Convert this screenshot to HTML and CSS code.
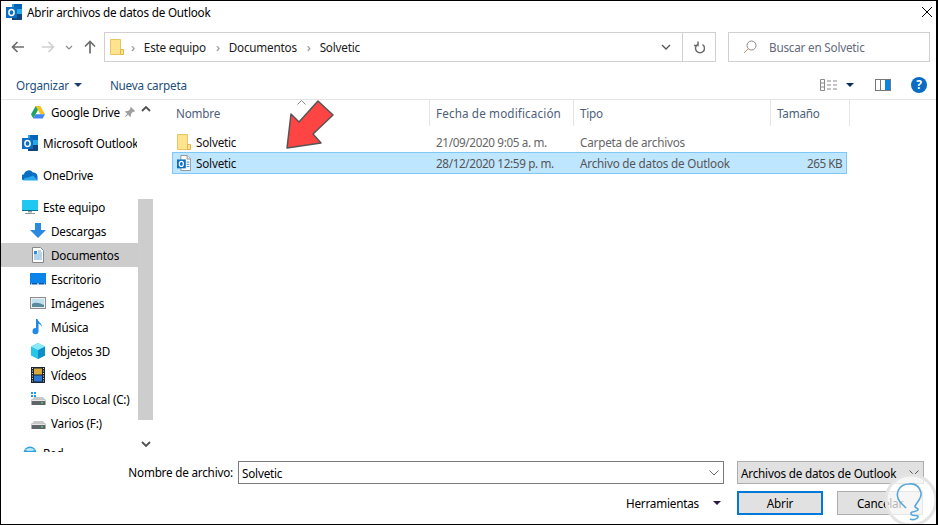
FILE: index.html
```html
<!DOCTYPE html>
<html lang="es">
<head>
<meta charset="utf-8">
<title>Abrir archivos de datos de Outlook</title>
<link rel="stylesheet" href="styles.css">
</head>
<body>
<svg class="defs" width="0" height="0">
  <defs>
    <symbol id="folder" viewBox="0 0 16 16">
      <path d="M1.5.5h10v15h-10z" fill="#ffe48f" stroke="#e8c560"/>
      <path d="M11.5 10.5h3v5h-3z" fill="#ffe48f" stroke="#e0b64a"/>
    </symbol>
    <symbol id="outlook" viewBox="0 0 16 16">
      <path d="M6 0h9a1 1 0 0 1 1 1v14a1 1 0 0 1-1 1H6z" fill="#28a8ea"/>
      <path d="M8 0h8v5H8z" fill="#0364b8"/>
      <path d="M6 10h10v5a1 1 0 0 1-1 1H6z" fill="#14447d"/>
      <rect y="3" width="11" height="11" fill="#0a6fc2"/>
      <ellipse cx="5.5" cy="8.5" rx="2.6" ry="3" fill="none" stroke="#fff" stroke-width="1.5"/>
    </symbol>
    <symbol id="outlookdoc" viewBox="0 0 16 18">
      <path d="M4.5.5h7l4 4v13h-11z" fill="#fff" stroke="#8a8a8a"/>
      <path d="M11.5.5v4h4" fill="#eee" stroke="#8a8a8a"/>
      <path d="M11 8h3M11 10.500h3M11 13h3" stroke="#2b7cd3"/>
      <rect y="5" width="10" height="10" fill="#0a6fc2"/>
      <ellipse cx="5" cy="10" rx="2.300" ry="2.800" fill="none" stroke="#fff" stroke-width="1.400"/>
    </symbol>
    <symbol id="drive" viewBox="0 0 14 13">
      <path d="M4.700 0h4.600L14 8.300h-4.600z" fill="#f7c31c"/>
      <path d="M4.700 0 7 4.100 2.300 12.500 0 8.300z" fill="#1fa463"/>
      <path d="M2.300 12.500 4.700 8.300H14l-2.300 4.200z" fill="#4286f5"/>
    </symbol>
    <symbol id="disk" viewBox="0 0 16 16">
      <path d="M2 8.500 4 6h9l2 2.500z" fill="#c8c8c8"/>
      <rect x="1.500" y="8.500" width="14" height="5.500" fill="#5f6468"/>
      <rect x="1.500" y="8.500" width="14" height="1.500" fill="#e8e8e8"/>
      <rect x="11" y="11" width="2" height="1.500" fill="#3fd06a"/>
    </symbol>
  </defs>
</svg>

<div class="dialog">
  <header class="titlebar">
    <svg class="ico16 title-ico" viewBox="0 0 16 16"><use href="#outlook"/></svg>
    <span class="title">Abrir archivos de datos de Outlook</span>
    <svg class="close" viewBox="0 0 10 10"><path d="M0 0l10 10M10 0L0 10" stroke="#000" fill="none"/></svg>
  </header>

  <div class="navrow">
    <div class="navbtns">
      <svg class="nav-ico" viewBox="0 0 14 12"><path d="M13 6H2M6.500 1 1.500 6l5 5" fill="none" stroke="#6d6d6d" stroke-width="1.700"/></svg>
      <svg class="nav-ico fwd" viewBox="0 0 14 12"><path d="M1 6h11M7.500 1l5 5-5 5" fill="none" stroke="#d0d0d0" stroke-width="1.700"/></svg>
      <svg class="nav-chev" viewBox="0 0 8 5"><path d="M1 1l3 3 3-3" fill="none" stroke="#8a8a8a" stroke-width="1.200"/></svg>
      <svg class="nav-ico up" viewBox="0 0 12 14"><path d="M6 13.500V2M1 6.500l5-5 5 5" fill="none" stroke="#6d6d6d" stroke-width="1.700"/></svg>
    </div>
    <div class="addr">
      <svg class="addr-folder" viewBox="0 0 16 16"><use href="#folder"/></svg>
      <span class="sep first">›</span><span>Este equipo</span>
      <span class="sep">›</span><span>Documentos</span>
      <span class="sep">›</span><span>Solvetic</span>
      <svg class="addr-chev" viewBox="0 0 10 6"><path d="M1 1l4 4 4-4" fill="none" stroke="#555" stroke-width="1.300"/></svg>
      <span class="addr-refresh">
        <svg viewBox="0 0 12 13" class="refresh"><path d="M3.500 3.500a4.500 4.500 0 1 0 5 0M4 .5v4H0" transform="translate(1 0)" fill="none" stroke="#6d6d6d" stroke-width="1.500"/></svg>
      </span>
    </div>
    <div class="search">
      <svg class="search-ico" viewBox="0 0 14 14"><circle cx="8.500" cy="5.500" r="4.500" fill="none" stroke="#8a8a8a"/><path d="M5.300 8.700 1 13" stroke="#c99b6a" fill="none"/></svg>
      <span>Buscar en Solvetic</span>
    </div>
  </div>

  <div class="toolbar">
    <span class="tool">Organizar</span>
    <span class="tri tri-blue"></span>
    <span class="tool new">Nueva carpeta</span>
    <span class="spacer"></span>
    <svg class="views" viewBox="0 0 17 12"><path d="M.5.500h4v11h-4zM.5 4h4M.5 8h4" fill="none" stroke="#8a8a8a"/><path d="M7 2h4M13 2h4M7 6h4M13 6h4M7 10h4M13 10h4" stroke="#8a8a8a"/></svg>
    <span class="tri tri-navy"></span>
    <svg class="pane" viewBox="0 0 16 12"><rect x=".5" y=".5" width="15" height="11" fill="#fff" stroke="#777"/><path d="M5.500 0v12" stroke="#777"/><rect x="10" y="1" width="5" height="10" fill="#0a84e0"/></svg>
    <span class="help">?</span>
  </div>

  <div class="main">
    <nav class="sidebar">
      <div class="tree">
        <div class="item drive-row"><svg class="ico-drive" viewBox="0 0 14 13"><use href="#drive"/></svg><span>Google Drive</span><svg class="pin" viewBox="0 0 10 10"><path d="M6 0l4 4-1 1-1-.300L6 7v2L5 10 3.300 7.700.500 10 0 9.500 2.300 6.700 0 5l1-1h2l2.300-2L5 1z" fill="#a0a0a0"/></svg></div>
        <div class="item root group"><svg class="ico16" viewBox="0 0 16 16"><use href="#outlook"/></svg><span class="clip">Microsoft Outlook</span></div>
        <div class="item root group">
          <svg class="ico16" viewBox="0 0 16 16"><path d="M1 13a3 3 0 0 1 1-5.800 5 5 0 0 1 9-1.700 4 4 0 0 1 4.500 4V13z" fill="#0a6fc2"/><path d="M1 13.500h15l-5-5-5 2-3 .5z" fill="#28a8ea"/></svg>
          <span>OneDrive</span>
        </div>
        <div class="item root group">
          <svg class="ico16" viewBox="0 0 16 16"><rect y="1" width="16" height="10" fill="#1ec8f0"/><rect y="11" width="16" height="1" fill="#0d6f8f"/><path d="M6 12h4v1.500H6zM3 14h10v1H3z" fill="#8f9ba3"/></svg>
          <span>Este equipo</span>
        </div>
        <div class="item child">
          <svg class="ico16" viewBox="0 0 16 16"><path d="M5 0h6v7h5l-8 8-8-8h5z" fill="#2a8ae0"/></svg>
          <span>Descargas</span>
        </div>
        <div class="item child active">
          <svg class="ico16" viewBox="0 0 16 16"><path d="M2.500.5h8l3 3v12h-11z" fill="#fff" stroke="#888"/><path d="M4 4h3v3H4z" fill="#2a8ae0"/><path d="M8 4h3M8 6h4M4 8h8M4 10h8M4 12h8" stroke="#6aa9d8"/></svg>
          <span>Documentos</span>
        </div>
        <div class="item child">
          <svg class="ico16" viewBox="0 0 16 16"><rect y="2" width="16" height="11" fill="#0a84e8"/><rect y="12" width="16" height="1.500" fill="#0858a8"/><path d="M1 13h1M7 13h2M14 13h1" stroke="#fff"/></svg>
          <span>Escritorio</span>
        </div>
        <div class="item child">
          <svg class="ico16" viewBox="0 0 16 16"><rect x=".5" y="2.500" width="15" height="11" fill="#eee" stroke="#8d8d8d"/><rect x="2" y="4" width="12" height="8" fill="#bfe0ee"/><path d="M2 9q4-3 12 1v2H2z" fill="#5a8b9c"/></svg>
          <span>Imágenes</span>
        </div>
        <div class="item child">
          <svg class="ico16" viewBox="0 0 16 16"><path d="M6 0h1.500c.5 3 4.500 4 4.500 8-1-2-2-3-3.500-3.300V12a3 3 0 1 1-2.500-2.800z" fill="#1e8ae6"/></svg>
          <span>Música</span>
        </div>
        <div class="item child">
          <svg class="ico16" viewBox="0 0 16 16"><path d="M8 0l7 3.500v9L8 16l-7-3.500v-9z" fill="#25c6e8"/><path d="M8 7l7-3.500v9L8 16z" fill="#0d8fc8"/><path d="M8 0l7 3.500L8 7 1 3.500z" fill="#8be8f6"/></svg>
          <span>Objetos 3D</span>
        </div>
        <div class="item child">
          <svg class="ico16" viewBox="0 0 16 16"><rect x="1" y="0" width="14" height="16" fill="#1b2430"/><rect x="4" y="1.500" width="8" height="6" fill="#d8a83a"/><rect x="4" y="8.500" width="8" height="6" fill="#2a78d0"/><path d="M2.500 1v14M13.500 1v14" stroke="#ddd" stroke-dasharray="1 1.500"/></svg>
          <span>Vídeos</span>
        </div>
        <div class="item child">
          <svg class="ico16" viewBox="0 0 16 16"><use href="#disk"/><path d="M1 1h2v2H1zM4 1h2v2H4zM1 4h2v2H1zM4 4h2v2H4z" fill="#1e9be8"/></svg>
          <span>Disco Local (C:)</span>
        </div>
        <div class="item child">
          <svg class="ico16" viewBox="0 0 16 16"><use href="#disk"/></svg>
          <span>Varios (F:)</span>
        </div>
        <div class="item root group-wide">
          <svg class="ico16" viewBox="0 0 16 16"><circle cx="8" cy="8" r="6.500" fill="#2aa3e0"/><path d="M3 5q5-4 10 0-5 2-10 0z" fill="#bfe6f5"/></svg>
          <span>Red</span>
        </div>
      </div>
      <div class="scrollbar">
        <svg class="sb-btn" viewBox="0 0 10 6"><path d="M1 5l4-4 4 4" fill="none" stroke="#505050" stroke-width="1.800"/></svg>
        <div class="thumb"></div>
        <svg class="sb-btn" viewBox="0 0 10 6"><path d="M1 1l4 4 4-4" fill="none" stroke="#505050" stroke-width="1.800"/></svg>
      </div>
    </nav>

    <section class="list">
      <div class="cols head">
        <div class="col c1">Nombre</div>
        <div class="col c2">Fecha de modificación</div>
        <div class="col c3">Tipo</div>
        <div class="col c4">Tamaño</div>
        <svg class="sort" viewBox="0 0 9 5"><path d="M.5 4.500l4-4 4 4" fill="none" stroke="#8a8a8a"/></svg>
      </div>
      <div class="rows">
        <div class="row">
          <div class="cell name"><svg class="ico16" viewBox="0 0 16 16"><use href="#folder"/></svg><span>Solvetic</span></div>
          <div class="cell meta date">21/09/2020 9:05 a. m.</div>
          <div class="cell meta">Carpeta de archivos</div>
          <div class="cell"></div>
        </div>
        <div class="row selected">
          <div class="cell name"><svg class="ico16" viewBox="0 0 16 18"><use href="#outlookdoc"/></svg><span>Solvetic</span></div>
          <div class="cell meta date">28/12/2020 12:59 p. m.</div>
          <div class="cell meta">Archivo de datos de Outlook</div>
          <div class="cell meta size">265 KB</div>
        </div>
      </div>
    </section>
  </div>

  <footer class="footer">
    <div class="file-row">
      <label class="file-label">Nombre de archivo:</label>
      <div class="file-input"><span>Solvetic</span><svg class="combo-chev" viewBox="0 0 10 6"><path d="M.5.500 5 5 9.500.5" fill="none" stroke="#666"/></svg></div>
      <div class="filter"><span>Archivos de datos de Outlook</span><svg class="combo-chev" viewBox="0 0 10 6"><path d="M.5.500 5 5 9.500.5" fill="none" stroke="#555"/></svg></div>
    </div>
    <div class="btn-row">
      <span class="tools">Herramientas</span>
      <span class="tri tri-dark"></span>
      <button class="btn primary">Abrir</button>
      <button class="btn">Cancelar</button>
    </div>
  </footer>

  <svg class="arrow" viewBox="0 0 52 52"><path d="M34 2 49 16 29 35l8 9-34 5 4-34 8 8z" fill="#ff4444" stroke="#555" stroke-width="1.500" stroke-linejoin="round"/></svg>
  <svg class="mark" viewBox="0 0 54 54">
    <circle cx="28" cy="27" r="25" fill="#fff" fill-opacity=".7" stroke="#e4e4e4" stroke-width="3"/>
    <path d="M17 29c-6-8-1-18 9-18 10-1 15 9 10 16l-4 6c-1 2 4 2 3 4s-8 1-7 4 8 0 7 3-6 3-8 2" fill="none" stroke="#5aa8d8" stroke-width="1.600"/>
    <path d="M17 29l6 6" fill="none" stroke="#5aa8d8" stroke-width="1.600"/>
  </svg>
</div>
</body>
</html>
```
FILE: styles.css
```css
* { box-sizing: border-box; }
html, body { margin: 0; padding: 0; }
body { width: 938px; height: 525px; overflow: hidden; background: #fff; font-family: "Noto Sans", "Open Sans", sans-serif; font-size: 11.7px; letter-spacing: -0.2px; color: #000; }
.defs { position: absolute; }
.dialog { position: relative; width: 938px; height: 525px; border: 1px solid #000; border-width: 1px 2px 1px 1px; background: #fff; display: flex; flex-direction: column; overflow: hidden; }
svg { display: block; flex: none; }
.ico16 { width: 16px; height: 16px; }

.titlebar { height: 24px; display: flex; align-items: center; padding: 0 0 2px 5px; flex: none; }
.title-ico { margin-top: -1px; }
.title { margin-left: 5px; color: #000; }
.close { width: 10px; height: 10px; margin-left: auto; margin-right: 4px; margin-top: -1px; }

.navrow { height: 37px; padding: 7px 0 0 0; display: flex; flex: none; align-items: flex-start; }
.navbtns { width: 103px; height: 30px; display: flex; align-items: center; padding-left: 10px; flex: none; }
.nav-ico { width: 14px; height: 12px; }
.nav-ico.fwd { margin-left: 16px; }
.nav-chev { width: 8px; height: 5px; margin-left: 10px; }
.nav-ico.up { width: 12px; height: 14px; margin-left: 11px; }
.addr { width: 612px; height: 30px; border: 1px solid #d0d0d0; display: flex; align-items: center; padding-left: 4px; flex: none; color: #1a1a1a; }
.addr-folder { width: 16px; height: 18px; }
.sep { color: #888; margin: 0 9px 0 10px; font-size: 13px; line-height: 12px; }
.sep.first { margin-left: 6px; margin-right: 9px; }
.addr-chev { width: 10px; height: 6px; margin-left: auto; margin-right: 11px; }
.addr-refresh { width: 33px; height: 100%; border-left: 1px solid #d0d0d0; display: flex; align-items: center; justify-content: center; }
.refresh { width: 12px; height: 13px; }
.search { width: 202px; height: 30px; margin-left: 12px; border: 1px solid #d0d0d0; display: flex; align-items: center; padding-left: 14px; color: #5f6b7c; flex: none; }
.search-ico { width: 14px; height: 14px; margin-right: 12px; }

.toolbar { height: 38px; display: flex; align-items: center; padding: 9px 9px 0 15px; border-bottom: 1px solid #e5e5e5; flex: none; }
.tool { color: #1c4f7c; }
.tool.new { margin-left: 28px; }
.tri { width: 0; height: 0; border-style: solid; border-width: 4px 4px 0; border-color: #1c3f6c transparent transparent; margin-left: 5px; }
.spacer { flex: 1; }
.views { width: 17px; height: 12px; }
.tri-navy { margin-left: 9px; border-color: #0b2e5c transparent transparent; }
.pane { width: 16px; height: 12px; margin-left: 21px; }
.help { width: 16px; height: 16px; margin-left: 20px; border-radius: 50%; background: #0a6cc4; color: #fff; font-weight: 700; font-size: 12px; line-height: 16px; text-align: center; letter-spacing: 0; }

.main { height: 352px; display: flex; flex: none; overflow: hidden; }
.sidebar { width: 152px; display: flex; flex: none; overflow: hidden; }
.tree { width: 137px; flex: none; }
.item { height: 24px; display: flex; align-items: center; white-space: nowrap; color: #000; }
.item > span { margin-left: 5px; }
.drive-row { padding-left: 30px; }
.drive-row > span { margin-left: 6px; }
.ico-drive { width: 14px; height: 13px; }
.pin { width: 10px; height: 10px; margin-left: 5px; }
.root { padding-left: 21px; }
.group { margin-top: 8px; }
.root.group:nth-child(2) { margin-top: 7px; }
.group-wide { margin-top: 6px; }
.child { padding-left: 29px; }
.child.active { background: #cccccc; }
.clip { width: 94px; overflow: hidden; }
.scrollbar { width: 15px; display: flex; flex-direction: column; align-items: center; height: 352px; }
.sb-btn { width: 10px; height: 6px; }
.sb-btn:first-child { margin-top: 6px; }
.thumb { width: 15px; height: 221px; margin-top: 87px; background: #cdcdcd; margin-bottom: 21px; }

.list { flex: 1; padding-left: 17px; }
.cols { position: relative; display: grid; grid-template-columns: 260px 144px 197px 79px; height: 25px; width: 680px; }
.col { padding-left: 6px; border-right: 1px solid #e5e5e5; line-height: 26px; color: #4c607a; white-space: nowrap; }
.c2 { letter-spacing: 0.13px; }
.sort { position: absolute; left: 127px; top: 0; width: 9px; height: 5px; }
.rows { padding: 6px 0 0 2px; }
.row { display: grid; grid-template-columns: 257px 144px 197px 75px; width: 675px; height: 21px; border: 1px solid transparent; align-items: center; white-space: nowrap; }
.row.selected { height: 22px; background: #bfe6ff; border-color: #7fc8f5; padding-bottom: 1px; }
.cell { padding-left: 6px; }
.cell.name { display: flex; align-items: center; padding-left: 3px; }
.cell.name > span { margin-left: 4px; color: #111; }
.meta { color: #666; }
.date { letter-spacing: -0.35px; }
.selected .meta { color: #555; }
.size { text-align: right; padding-right: 4px; letter-spacing: -0.5px; }

.footer { flex: 1; display: flex; flex-direction: column; position: relative; }
.file-row { display: flex; margin-top: 9px; height: 23px; align-items: stretch; }
.file-label { width: 232px; text-align: right; line-height: 23px; flex: none; }
.file-input { width: 486px; margin-left: 5px; border: 1px solid #7a7a7a; display: flex; align-items: center; padding-left: 3px; justify-content: space-between; padding-right: 4px; flex: none; }
.filter { width: 187px; margin-left: 13px; background: #e1e1e1; border: 1px solid #adadad; display: flex; align-items: center; justify-content: space-between; padding: 0 4px 0 3px; white-space: nowrap; flex: none; }
.combo-chev { width: 10px; height: 6px; }
.btn-row { display: flex; align-items: center; margin-top: 7px; height: 24px; padding-left: 625px; }
.tools { width: 87px; }
.tri-dark { margin: 0; border-color: #2a1a4a transparent transparent; }
.btn { width: 86px; height: 24px; background: #e1e1e1; border: 1px solid #adadad; font: inherit; letter-spacing: inherit; color: #000; padding: 0; }
.btn.primary { margin-left: 16px; border: 2px solid #0078d7; }
.btn + .btn { margin-left: 14px; }

.arrow { position: absolute; left: 283px; top: 98px; width: 52px; height: 52px; }
.mark { position: absolute; left: 882px; top: 472px; width: 54px; height: 54px; }
```
